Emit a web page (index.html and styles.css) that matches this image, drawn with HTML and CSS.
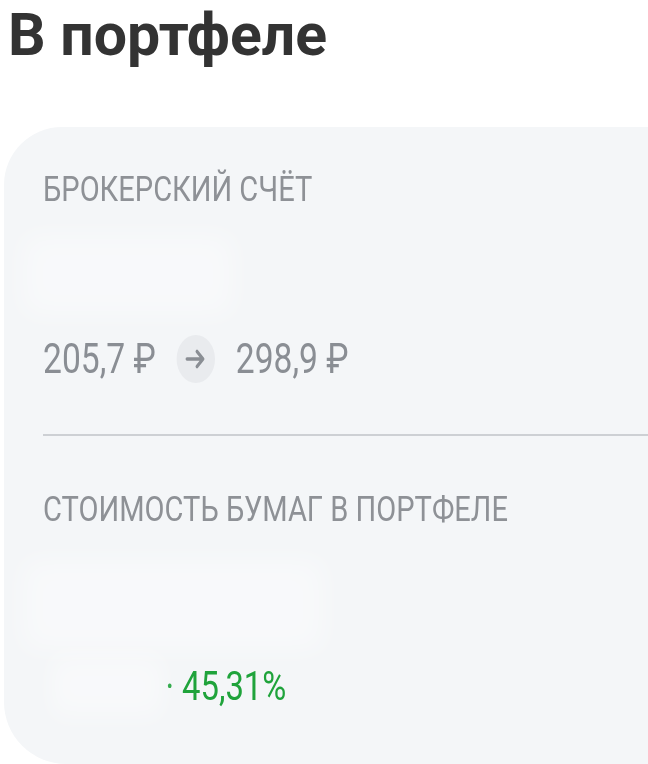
FILE: index.html
```html
<!DOCTYPE html>
<html lang="ru">
  <head>
    <meta charset="UTF-8" />
    <meta name="viewport" content="width=device-width, initial-scale=1.0" />
    <title>В портфеле</title>
    <link rel="stylesheet" href="styles.css">
  </head>
  <body>
    <h1 class="title">В портфеле</h1>
    <div class="card">
      <div class="label">БРОКЕРСКИЙ СЧЁТ</div>
      <div class="hidden hidden-balance"></div>
      <div class="change squash">
        <span class="amount">205,7 ₽</span>
        <span class="arrow">
          <svg width="28" height="22" viewBox="0 0 28 22">
            <path d="M3 11h20M15.5 3.5l7.5 7.5-7.5 7.5" fill="none" stroke="#8a8e94" stroke-width="3.6" stroke-linecap="round" stroke-linejoin="round" />
          </svg>
        </span>
        <span class="amount">298,9 ₽</span>
      </div>
      <div class="divider"></div>
      <div class="label">СТОИМОСТЬ БУМАГ В ПОРТФЕЛЕ</div>
      <div class="hidden hidden-value"></div>
      <div class="profit squash">
        <span class="hidden hidden-sum"></span>
        <span class="percent">· 45,31%</span>
      </div>
    </div>
  </body>
</html>
```

FILE: styles.css
```css
body {
  margin: 0;
  padding: 0;
  background: #fff;
  font-family: Roboto, "Noto Sans", sans-serif;
  overflow: hidden;
}
.title {
  margin: 0;
  padding: 1px 0 0 8px;
  font-size: 59px;
  line-height: 68px;
  font-weight: 700;
  color: #333;
}
.card {
  margin: 58px 0 0 4px;
  width: 720px;
  padding: 42px 0 54px 39px;
  box-sizing: border-box;
  background: #f4f6f8;
  border-radius: 58px 0 0 62px;
}
.squash {
  transform: scaleX(0.8);
  transform-origin: left center;
}
.label {
  font-size: 35px;
  line-height: 41px;
  color: #8e9196;
  white-space: nowrap;
  transform: scaleX(0.83);
  transform-origin: left center;
}
.hidden {
  background: rgba(255, 255, 255, 0.4);
  filter: blur(14px);
  border-radius: 6px;
}
.hidden-balance {
  width: 210px;
  height: 80px;
  margin: 25px 0 20px -20px;
}
.change {
  display: flex;
  align-items: center;
  gap: 26px;
  height: 48px;
}
.amount {
  font-size: 42px;
  line-height: 48px;
  color: #8a8e94;
  white-space: nowrap;
}
.arrow {
  width: 48px;
  height: 48px;
  border-radius: 50%;
  background: #e9ebee;
  display: flex;
  align-items: center;
  justify-content: center;
}
.divider {
  height: 2px;
  margin-top: 51px;
  background: #cdd0d4;
}
.divider + .label {
  margin-top: 53px;
}
.hidden-value {
  width: 300px;
  height: 90px;
  margin: 30px 0 0 -20px;
}
.profit {
  display: flex;
  align-items: center;
  height: 48px;
  margin-top: 12px;
}
.hidden-sum {
  width: 140px;
  height: 60px;
  margin-left: 10px;
}
.percent {
  margin-left: 3px;
  font-size: 41px;
  line-height: 48px;
  color: #1fa33b;
  white-space: nowrap;
}
```
